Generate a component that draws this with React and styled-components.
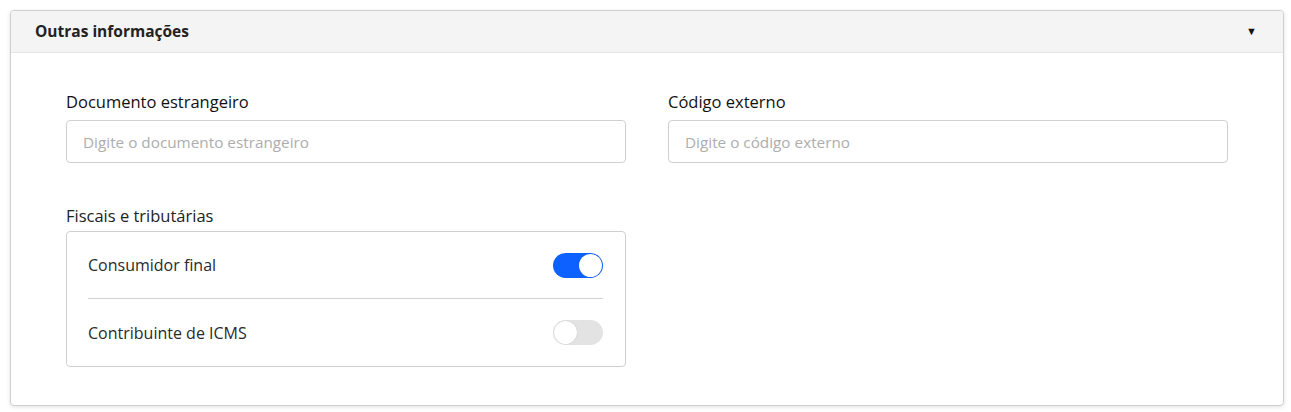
import React, { useState } from 'react';
import styled, { createGlobalStyle } from 'styled-components';

const GlobalStyle = createGlobalStyle`
  body {
    margin: 0;
    background: #fff;
    font-family: "Open Sans", "Noto Sans", sans-serif;
    color: #1e1e1e;
  }
`;

const Page = styled.div`
  padding: 10px 7px 6px 10px;
`;

const Card = styled.section`
  border: 1px solid #cfcfcf;
  border-radius: 4px;
  box-shadow: 0 1px 4px rgba(0, 0, 0, 0.12);
  overflow: hidden;
  background: #fff;
`;

const CardHeader = styled.div`
  height: 42px;
  display: flex;
  align-items: center;
  justify-content: space-between;
  padding: 0 26px 2px 24px;
  box-sizing: border-box;
  background: #f4f4f4;
  border-bottom: 1px solid #e6e6e6;
`;

const Title = styled.h2`
  margin: 0;
  font-size: 15.5px;
  line-height: 20px;
  font-weight: 700;
  color: #222;
`;

const Caret = styled.span`
  font-size: 11px;
  color: #111;
`;

const CardBody = styled.div`
  padding: 39px 55px 38px 55px;
  display: grid;
  grid-template-columns: 560px 560px;
  column-gap: 42px;
  row-gap: 43px;
`;

const Field = styled.div`
  display: flex;
  flex-direction: column;
`;

const Label = styled.label`
  font-size: 16.5px;
  font-weight: 500;
  color: #111;
  margin-bottom: 8px;
  line-height: 20px;
`;

const Input = styled.input`
  height: 43px;
  box-sizing: border-box;
  border: 1px solid #d0d0d0;
  border-radius: 4px;
  padding: 0 16px;
  font-family: inherit;
  font-size: 15.3px;
  color: #222;
  outline: none;
  &::placeholder {
    color: #adadad;
  }
`;

const Group = styled.div`
  display: flex;
  flex-direction: column;
`;

const GroupLabel = styled.div`
  font-size: 16.5px;
  color: #222;
  line-height: 20px;
  margin-bottom: 5px;
`;

const GroupBox = styled.div`
  border: 1px solid #cfcfcf;
  border-radius: 4px;
  padding: 0 22px 0 21px;
  height: 136px;
  box-sizing: border-box;
  display: flex;
  flex-direction: column;
`;

const Row = styled.div`
  display: flex;
  align-items: center;
  justify-content: space-between;
  height: ${({ $divider }) => ($divider ? '66px' : '67px')};
  border-bottom: ${({ $divider }) => ($divider ? '1px solid #d2d2d2' : 'none')};
`;

const RowText = styled.span`
  font-size: 16px;
  color: #2a2a2a;
`;

const Switch = styled.button`
  width: 50px;
  height: 25px;
  border-radius: 13px;
  border: none;
  padding: 0;
  cursor: pointer;
  position: relative;
  background: ${({ $on }) => ($on ? '#0d62ff' : '#e3e3e3')};
  &::after {
    content: '';
    position: absolute;
    top: 1px;
    left: ${({ $on }) => ($on ? '26px' : '1px')};
    width: 23px;
    height: 23px;
    border-radius: 50%;
    background: #fff;
    box-shadow: 0 0 1px rgba(0, 0, 0, 0.25);
  }
`;

export default function App() {
  const [consumidor, setConsumidor] = useState(true);
  const [icms, setIcms] = useState(false);

  return (
    <Page>
      <GlobalStyle />
      <Card>
        <CardHeader>
          <Title>Outras informações</Title>
          <Caret>▼</Caret>
        </CardHeader>
        <CardBody>
          <Field>
            <Label>Documento estrangeiro</Label>
            <Input placeholder="Digite o documento estrangeiro" />
          </Field>
          <Field>
            <Label>Código externo</Label>
            <Input placeholder="Digite o código externo" />
          </Field>
          <Group>
            <GroupLabel>Fiscais e tributárias</GroupLabel>
            <GroupBox>
              <Row $divider>
                <RowText>Consumidor final</RowText>
                <Switch $on={consumidor} onClick={() => setConsumidor(!consumidor)} />
              </Row>
              <Row>
                <RowText>Contribuinte de ICMS</RowText>
                <Switch $on={icms} onClick={() => setIcms(!icms)} />
              </Row>
            </GroupBox>
          </Group>
        </CardBody>
      </Card>
    </Page>
  );
}
